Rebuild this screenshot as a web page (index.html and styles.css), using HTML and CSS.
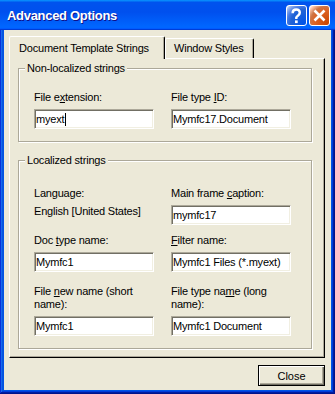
FILE: index.html
```html
<!DOCTYPE html>
<html lang="en">
<head>
    <meta charset="UTF-8">
    <meta name="viewport" content="width=device-width, initial-scale=1.0">
    <title>Advanced Options</title>
    <link rel="stylesheet" href="styles.css">
</head>
<body>
    <div class="window">
        <div class="titlebar">
            <span class="title">Advanced Options</span>
            <div class="title-buttons">
                <button class="tb-btn help" aria-label="Help">
                    <svg width="19" height="19" viewBox="0 0 19 19">
                        <path d="M5.6 7.2 C5.6 4.6 7.2 3.5 9.2 3.5 C11.3 3.5 12.8 4.8 12.8 6.8 C12.8 9.1 10.2 9.6 9.3 11.6 L9.3 13" fill="none" stroke="#fff" stroke-width="2.4"/>
                        <rect x="8" y="14.4" width="2.7" height="2.7" fill="#fff"/>
                    </svg>
                </button>
                <button class="tb-btn close" aria-label="Close">
                    <svg width="19" height="19" viewBox="0 0 19 19">
                        <path d="M4.5 4.5 L14.5 14.5 M14.5 4.5 L4.5 14.5" stroke="#fff" stroke-width="2.6"/>
                    </svg>
                </button>
            </div>
        </div>
        <div class="client">
            <div class="tabs">
                <div class="tab active">Document Template Strings</div>
                <div class="tab">Window Styles</div>
            </div>
            <div class="panel">
                <div class="group">
                    <div class="group-title">Non-localized strings</div>
                    <div class="fields first">
                        <div class="field">
                            <label>File e<u>x</u>tension:</label>
                            <div class="edit">myext<span class="caret"></span></div>
                        </div>
                        <div class="field">
                            <label>File type <u>I</u>D:</label>
                            <div class="edit">Mymfc17.Document</div>
                        </div>
                    </div>
                </div>
                <div class="group">
                    <div class="group-title">Localized strings</div>
                    <div class="fields second">
                        <div class="field">
                            <label>Language:</label>
                            <div class="value">English [United States]</div>
                        </div>
                        <div class="field">
                            <label>Main frame <u>c</u>aption:</label>
                            <div class="edit">mymfc17</div>
                        </div>
                        <div class="field">
                            <label>Doc <u>t</u>ype name:</label>
                            <div class="edit">Mymfc1</div>
                        </div>
                        <div class="field">
                            <label><u>F</u>ilter name:</label>
                            <div class="edit">Mymfc1 Files (*.myext)</div>
                        </div>
                        <div class="field tall">
                            <label>File <u>n</u>ew name (short<br>name):</label>
                            <div class="edit">Mymfc1</div>
                        </div>
                        <div class="field tall">
                            <label>File type na<u>m</u>e (long<br>name):</label>
                            <div class="edit">Mymfc1 Document</div>
                        </div>
                    </div>
                </div>
            </div>
            <div class="actions">
                <button class="btn">Close</button>
            </div>
        </div>
    </div>
</body>
</html>
```

FILE: styles.css
```css
*, ::before, ::after {
    margin: 0;
    padding: 0;
    box-sizing: border-box;
}

body {
    background-color: #fff;
    font-family: "Liberation Sans", Arial, sans-serif;
    font-size: 11px;
    letter-spacing: -0.2px;
    color: #000;
}

.window {
    width: 335px;
    height: 394px;
    display: flex;
    flex-direction: column;
    background-color: #0055e5;
    box-shadow: inset -1px -1px #00138c, inset 1px 1px #0831d9, inset -2px -2px #001ea0, inset 2px 2px #166aee, inset -3px -3px #003bda, inset 3px 3px #0855dd;
}

.titlebar {
    height: 30px;
    flex-shrink: 0;
    display: flex;
    align-items: center;
    justify-content: space-between;
    padding: 1px 5px 0 7px;
    background: linear-gradient(180deg, #0997ff, #0053ee 8%, #0050ee 40%, #06f 88%, #06f 93%, #005bff 95%, #003dd7 96%, #003dd7);
}

.title {
    color: #fff;
    font-weight: bold;
    font-size: 13px;
    letter-spacing: -0.3px;
    text-shadow: 1px 1px #0f1089;
}

.title-buttons {
    display: flex;
    gap: 2px;
}

.tb-btn {
    width: 21px;
    height: 21px;
    border: 1px solid #fff;
    border-radius: 3px;
    display: flex;
    align-items: center;
    justify-content: center;
}

.help {
    background: radial-gradient(circle at 90% 90%, #0054e9 0%, #2263d5 55%, #4479e4 70%, #a3bbec 90%, #fff 100%);
}

.close {
    background: radial-gradient(circle at 90% 90%, #cc4600 0%, #dc6527 55%, #cd7546 70%, #ffccb2 90%, #fff 100%);
}

.client {
    flex: 1;
    margin: 0 4px 4px;
    padding: 6px 6px 4px 5px;
    background-color: #ece9d8;
    display: flex;
    flex-direction: column;
}

.tabs {
    height: 22px;
    display: flex;
    align-items: flex-end;
}

.tab {
    width: 89px;
    height: 20px;
    padding: 3px 0 0 8px;
    line-height: 13px;
    white-space: nowrap;
    background-color: #ece9d8;
    border: 1px solid #fff;
    border-bottom: 0;
    border-right-color: #000;
    border-radius: 2px 2px 0 0;
    box-shadow: inset -1px 0 #aca899;
}

.tab.active {
    width: 156px;
    height: 23px;
    margin-bottom: -1px;
    padding: 5px 0 0 9px;
    position: relative;
    z-index: 1;
}

.panel {
    height: 300px;
    padding: 9px 0 0 8px;
    border: 1px solid #fff;
    border-right-color: #000;
    border-bottom-color: #000;
    box-shadow: inset -1px -1px #aca899;
}

.group {
    width: 294px;
    padding-bottom: 12px;
    border: 1px solid #aca899;
    box-shadow: inset 1px 1px #fff, 1px 1px #fff;
}

.group + .group {
    margin-top: 18px;
}

.group-title {
    width: fit-content;
    margin: -7px 0 0 6px;
    padding: 0 2px;
    line-height: 13px;
    background-color: #ece9d8;
}

.fields {
    display: grid;
    grid-template-columns: 120px 120px;
    column-gap: 17px;
    row-gap: 9px;
    margin-left: 15px;
}

.fields.first {
    margin-top: 16px;
}

.fields.second {
    margin-top: 20px;
}

.field {
    display: flex;
    flex-direction: column;
}

.field.tall {
    margin-top: 4px;
}

.field label {
    line-height: 13px;
    margin-bottom: 5px;
}

.value {
    line-height: 13px;
}

.edit {
    height: 20px;
    padding-left: 1px;
    line-height: 18px;
    white-space: nowrap;
    overflow: hidden;
    background-color: #fff;
    border: 1px solid;
    border-color: #aca899 #fff #fff #aca899;
    box-shadow: inset 1px 1px #716f64, inset -1px -1px #f1efe2;
}

.caret {
    display: inline-block;
    width: 1px;
    height: 13px;
    margin-left: 1px;
    vertical-align: -3px;
    background-color: #000;
}

.actions {
    display: flex;
    justify-content: flex-end;
    margin-top: 7px;
}

.btn {
    width: 67px;
    height: 21px;
    font: inherit;
    color: #000;
    background-color: #ece9d8;
    border: 1px solid #000;
    box-shadow: inset 1px 1px #fff, inset -1px -1px #716f64, inset -2px -2px #aca899;
}
```
